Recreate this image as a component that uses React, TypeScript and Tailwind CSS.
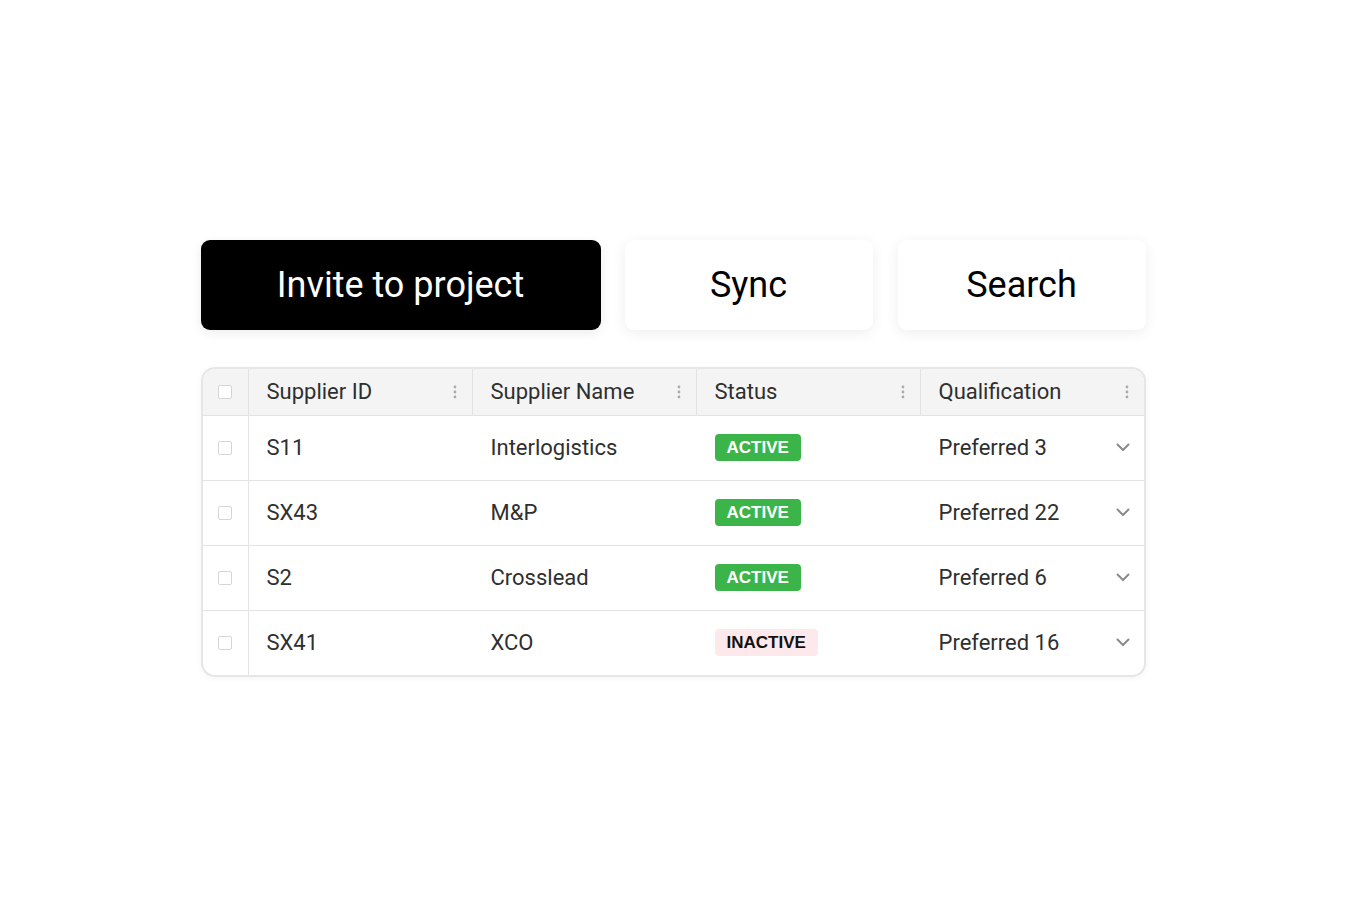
import React from 'react';

type Row = {
  id: string;
  name: string;
  active: boolean;
  qualification: string;
};

const rows: Row[] = [
  { id: 'S11', name: 'Interlogistics', active: true, qualification: 'Preferred 3' },
  { id: 'SX43', name: 'M&P', active: true, qualification: 'Preferred 22' },
  { id: 'S2', name: 'Crosslead', active: true, qualification: 'Preferred 6' },
  { id: 'SX41', name: 'XCO', active: false, qualification: 'Preferred 16' },
];

const Kebab: React.FC = () => (
  <svg width="4" height="14" viewBox="0 0 4 14" className="shrink-0">
    <circle cx="2" cy="2" r="1.4" fill="#aaaaaa" />
    <circle cx="2" cy="7" r="1.4" fill="#aaaaaa" />
    <circle cx="2" cy="12" r="1.4" fill="#aaaaaa" />
  </svg>
);

const Chevron: React.FC = () => (
  <svg width="14" height="9" viewBox="0 0 14 9" fill="none">
    <path d="M1.5 1.5 7 7l5.5-5.5" stroke="#8a8a8a" strokeWidth="2" strokeLinecap="round" strokeLinejoin="round" />
  </svg>
);

const Checkbox: React.FC = () => (
  <span className="block w-[14px] h-[14px] border-[1.5px] border-[#d6d6d6] rounded-[2px] bg-white" />
);

const HeaderCell: React.FC<{ label: string; last?: boolean }> = ({ label, last }) => (
  <div
    className={`flex items-center justify-between pl-[18px] pr-[15px] ${
      last ? '' : 'border-r border-[#e2e2e2]'
    }`}
  >
    <span>{label}</span>
    <Kebab />
  </div>
);

const badgeFont = { fontFamily: '"Liberation Sans", Arial, sans-serif' };

const App: React.FC = () => {
  return (
    <div
      className="w-full h-[916px] bg-white flex items-center justify-center text-[#2f2f2f]"
      style={{ fontFamily: 'Roboto, "Liberation Sans", sans-serif' }}
    >
      <div className="w-[945px] flex flex-col gap-[37px]">
        {/* Actions */}
        <div className="flex gap-6">
          <button className="w-[400px] h-[90px] rounded-[9px] bg-black text-white text-[36px] shadow-[0_3px_12px_rgba(0,0,0,0.08)]">
            Invite to project
          </button>
          <button className="w-[248px] h-[90px] rounded-[9px] bg-white text-black text-[36px] shadow-[0_3px_14px_rgba(0,0,0,0.07)]">
            Sync
          </button>
          <button className="w-[248px] h-[90px] ml-px rounded-[9px] bg-white text-black text-[36px] shadow-[0_3px_14px_rgba(0,0,0,0.07)]">
            Search
          </button>
        </div>

        {/* Table */}
        <div className="w-[945px] border-2 border-[#e6e6e6] rounded-[14px] overflow-hidden text-[22px] shadow-[0_2px_6px_rgba(0,0,0,0.04)]">
          <div className="grid grid-cols-[46px_224px_224px_224px_223px] h-[47px] bg-[#f5f4f4] border-b border-[#e2e2e2]">
            <div className="flex items-center justify-center border-r border-[#e2e2e2]">
              <Checkbox />
            </div>
            <HeaderCell label="Supplier ID" />
            <HeaderCell label="Supplier Name" />
            <HeaderCell label="Status" />
            <HeaderCell label="Qualification" last />
          </div>
          {rows.map((r, i) => (
            <div
              key={r.id}
              className={`grid grid-cols-[46px_224px_224px_224px_223px] ${
                i < rows.length - 1 ? 'h-[65px] border-b border-[#e4e4e4]' : 'h-[64px]'
              }`}
            >
              <div className="flex items-center justify-center border-r border-[#e4e4e4]">
                <Checkbox />
              </div>
              <div className="flex items-center pl-[18px]">{r.id}</div>
              <div className="flex items-center pl-[18px]">{r.name}</div>
              <div className="flex items-center pl-[18px]">
                {r.active ? (
                  <span
                    className="h-[27px] px-[12px] flex items-center rounded-[4px] bg-[#3bb54a] text-white text-[17px] font-bold"
                    style={badgeFont}
                  >
                    ACTIVE
                  </span>
                ) : (
                  <span
                    className="h-[27px] px-[12px] flex items-center rounded-[4px] bg-[#fde9eb] text-[#111] text-[17px] font-bold"
                    style={badgeFont}
                  >
                    INACTIVE
                  </span>
                )}
              </div>
              <div className="flex items-center justify-between pl-[18px] pr-[14px]">
                <span>{r.qualification}</span>
                <Chevron />
              </div>
            </div>
          ))}
        </div>
      </div>
    </div>
  );
};

export default App;
